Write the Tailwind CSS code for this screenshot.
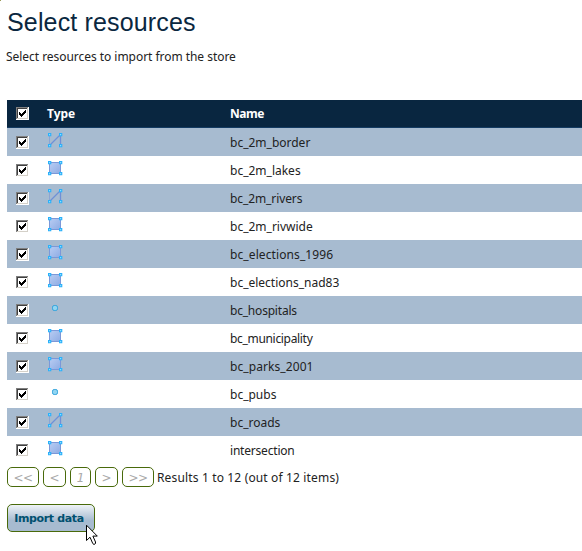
<!DOCTYPE html>
<html lang="en">
<head>
<meta charset="utf-8">
<title>Select resources</title>
<script src="https://cdn.jsdelivr.net/npm/@tailwindcss/browser@4"></script>
</head>
<body class="relative h-[551px] w-[582px] overflow-hidden bg-white pl-[7px] font-['Noto_Sans','Open_Sans',sans-serif] text-[12px] text-[#222]">
<svg width="0" height="0" class="absolute">
  <defs>
    <linearGradient id="fill" x1="0" y1="0" x2="1" y2="1"><stop offset="0" stop-color="#b9cdf3"/><stop offset="1" stop-color="#8eabe3"/></linearGradient>
    <g id="nodes"><path fill="#2bb0fa" d="M0 0h3.3v3.3H0zM11 0h3.3v3.3H11zM0 11h3.3v3.3H0zM11 11h3.3v3.3H11z"/><path fill="#8be0ff" d="M1 1h1.2v1.2H1zM12 1h1.2v1.2H12zM1 12h1.2v1.2H1zM12 12h1.2v1.2H12z"/></g>
    <symbol id="line" viewBox="0 0 15 15"><path d="M1.5 2V12" stroke="#8ba5d3" fill="none"/><path d="M1.5 12.5L12.5 1.5V12" stroke="#6f90d6" stroke-width="1.3" fill="none"/><use href="#nodes"/></symbol>
    <symbol id="area" viewBox="0 0 15 15"><rect x="1.5" y="1.5" width="11" height="11" fill="url(#fill)" stroke="#7b98d8"/><use href="#nodes"/></symbol>
    <symbol id="point" viewBox="0 0 15 15"><rect x="4.5" y="4.5" width="5" height="5" rx="1.7" fill="#91d5f2" stroke="#35a5dd"/></symbol>
    <symbol id="check" viewBox="0 0 13 13" shape-rendering="crispEdges"><path fill="#fff" d="M0 0h13v13H0z"/><path fill="#808080" d="M0 0h12v1H1v11H0z"/><path fill="#404040" d="M1 1h10v1H2v9H1z"/><path fill="#d4d0c8" d="M11 1h1v11H1v-1h10z"/><path fill="#000" d="M3 5h1v3H3zM4 6h1v3H4zM5 7h1v3H5zM6 6h1v3H6zM7 5h1v3H7zM8 4h1v3H8zM9 3h1v3H9z"/></symbol>
  </defs>
</svg>
<h1 class="h-[47px] pt-[6px] font-['Liberation_Sans',Arial,sans-serif] text-[25px] leading-[32px] tracking-[0.15px] whitespace-nowrap text-[#0a2740]">Select resources</h1>
<p class="-ml-px h-[53px] text-[12px] leading-[20px] tracking-[-0.04px]">Select resources to import from the store</p>
<div class="flex h-[28px] items-start border-b border-[#143b62] bg-[#092640] text-[12px] font-bold text-white">
  <svg class="mt-[7px] ml-[9px] size-[13px]"><use href="#check"/></svg>
  <span class="ml-[18px] w-[183px] leading-[28px]">Type</span><span class="leading-[28px] tracking-[-0.5px]">Name</span>
</div>
<main id="rows"></main>
<nav class="flex h-[40px] items-start gap-[4px] pt-[3px] font-['DejaVu_Sans',sans-serif] text-[12px] leading-[20px] text-[#aaa] italic">
  <span class="h-[20px] w-[32px] rounded-[5px] border border-[#496a0b] text-center tracking-[-0.5px]">&lt;&lt;</span>
  <span class="h-[20px] w-[23px] rounded-[5px] border border-[#496a0b] text-center">&lt;</span>
  <span class="h-[20px] w-[21px] rounded-[5px] border border-[#496a0b] text-center">1</span>
  <span class="h-[20px] w-[23px] rounded-[5px] border border-[#496a0b] text-center">&gt;</span>
  <span class="h-[20px] w-[32px] rounded-[5px] border border-[#496a0b] text-center tracking-[-0.5px]">&gt;&gt;</span>
  <span class="-ml-px font-['Noto_Sans',sans-serif] text-[12px] leading-[21px] tracking-[0.15px] whitespace-nowrap text-[#222] not-italic">Results 1 to 12 (out of 12 items)</span>
</nav>
<button class="block h-[28px] w-[88px] rounded-[5px] border border-[#496a0b] bg-linear-to-b from-[#eff3f7] from-0% via-[#a7bbd0] via-60% to-[#a7bbd0] pr-[4px] text-center font-['DejaVu_Sans',sans-serif] text-[11px] leading-[28px] font-bold tracking-[-0.35px] whitespace-nowrap text-[#00506f]">Import data</button>
<svg class="absolute top-[524px] left-[86px] h-[22px] w-[13px]" viewBox="0 0 13 22"><path d="M.5 1.2V16.5L4 13.2L6.8 19.6L8 20.5L9.5 19.5V18L6.9 12.1H11.3Z" fill="#fff" stroke="#000"/></svg>
<svg class="absolute top-0 left-0 h-px w-px"><rect width="1" height="1" fill="#9b9b58"/></svg>
<script>
const data = [
  ["line","bc_2m_border",""],["area","bc_2m_lakes",""],["line","bc_2m_rivers","tracking-[-0.1px]"],["area","bc_2m_rivwide",""],
  ["area","bc_elections_1996","tracking-[0.1px]"],["area","bc_elections_nad83",""],["point","bc_hospitals","tracking-[-0.2px]"],["area","bc_municipality","tracking-[-0.32px]"],
  ["area","bc_parks_2001","tracking-[0.08px]"],["point","bc_pubs",""],["line","bc_roads",""],["area","intersection","tracking-[-0.2px]"]
];
document.getElementById("rows").innerHTML = data.map(([t,n,s]) => `<div class="flex h-[28px] items-start odd:bg-[#a7bbd0]"><svg class="mt-[8px] ml-[9px] size-[13px]"><use href="#check"/></svg><svg class="mt-[5px] ml-[19px] size-[15px]"><use href="#${t}"/></svg><span class="ml-[167px] leading-[30px] ${s}">${n}</span></div>`).join("");
</script>
</body>
</html>
